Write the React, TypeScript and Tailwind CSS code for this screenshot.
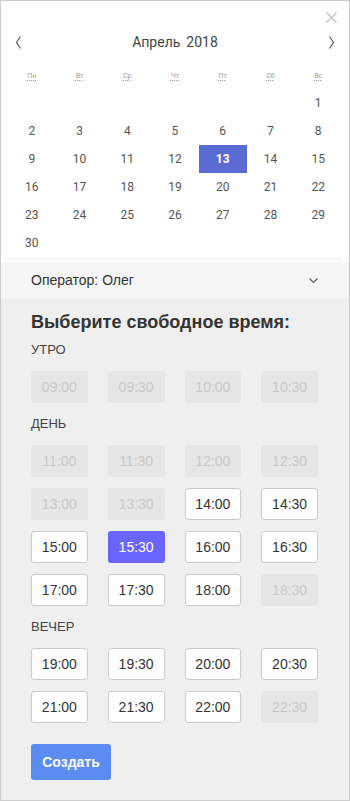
const weekdays = ['Пн', 'Вт', 'Ср', 'Чт', 'Пт', 'Сб', 'Вс'];

type Slot = { t: string; state: 'off' | 'free' | 'on' };

const groups: { title: string; slots: Slot[] }[] = [
  {
    title: 'Утро',
    slots: ['09:00', '09:30', '10:00', '10:30'].map((t) => ({ t, state: 'off' })),
  },
  {
    title: 'День',
    slots: [
      { t: '11:00', state: 'off' },
      { t: '11:30', state: 'off' },
      { t: '12:00', state: 'off' },
      { t: '12:30', state: 'off' },
      { t: '13:00', state: 'off' },
      { t: '13:30', state: 'off' },
      { t: '14:00', state: 'free' },
      { t: '14:30', state: 'free' },
      { t: '15:00', state: 'free' },
      { t: '15:30', state: 'on' },
      { t: '16:00', state: 'free' },
      { t: '16:30', state: 'free' },
      { t: '17:00', state: 'free' },
      { t: '17:30', state: 'free' },
      { t: '18:00', state: 'free' },
      { t: '18:30', state: 'off' },
    ],
  },
  {
    title: 'Вечер',
    slots: [
      { t: '19:00', state: 'free' },
      { t: '19:30', state: 'free' },
      { t: '20:00', state: 'free' },
      { t: '20:30', state: 'free' },
      { t: '21:00', state: 'free' },
      { t: '21:30', state: 'free' },
      { t: '22:00', state: 'free' },
      { t: '22:30', state: 'off' },
    ],
  },
];

function Calendar() {
  // April 2018 starts on a Sunday
  const cells: (number | null)[] = [null, null, null, null, null, null];
  for (let d = 1; d <= 30; d++) cells.push(d);

  return (
    <div className="relative bg-white px-[7px] pb-[3px] font-['Roboto',sans-serif]">
      <button className="absolute right-[12px] top-[11px] text-[#cfcfcf]">
        <svg width="11" height="11" viewBox="0 0 11 11" fill="none" stroke="currentColor" strokeWidth="1.6">
          <path d="M0.5 0.5L10.5 10.5M10.5 0.5L0.5 10.5" />
        </svg>
      </button>

      <div className="mt-[26px] flex h-[30px] items-center justify-between px-[7px] text-[#555]">
        <svg width="7" height="13" viewBox="0 0 7 13" fill="none" stroke="currentColor" strokeWidth="1.2">
          <path d="M5.5 0.5Q3 4 1.5 6.5Q3 9 5.5 12.5" />
        </svg>
        <div className="flex gap-[6px] text-[14px] text-[#444]">
          <span>Апрель</span>
          <span>2018</span>
        </div>
        <svg width="7" height="13" viewBox="0 0 7 13" fill="none" stroke="currentColor" strokeWidth="1.2">
          <path d="M1.5 0.5Q4 4 5.5 6.5Q4 9 1.5 12.5" />
        </svg>
      </div>

      <div className="mt-[7px] grid h-[25px] grid-cols-7 items-center">
        {weekdays.map((w) => (
          <abbr
            key={w}
            className="text-center text-[7px] text-[#9a9a9a] underline decoration-dotted underline-offset-2"
          >
            {w}
          </abbr>
        ))}
      </div>

      <div className="grid grid-cols-7 border-b border-[#eeeeee] pb-[1px]">
        {cells.map((d, i) => (
          <div
            key={i}
            className={
              d === 13
                ? 'flex h-[28px] items-center justify-center bg-[#5a6bd3] text-[12px] font-bold text-white'
                : 'flex h-[28px] items-center justify-center text-[12px] text-[#555]'
            }
          >
            {d ?? ''}
          </div>
        ))}
      </div>
    </div>
  );
}

function SlotButton({ slot }: { slot: Slot }) {
  if (slot.state === 'off')
    return (
      <div className="flex h-[32px] items-center justify-center rounded-[3px] bg-[#e6e6e6] text-[14px] text-[#c9c9c9]">
        {slot.t}
      </div>
    );
  if (slot.state === 'on')
    return (
      <button className="flex h-[32px] items-center justify-center rounded-[3px] bg-[#6a65ff] text-[14px] text-white">
        {slot.t}
      </button>
    );
  return (
    <button className="flex h-[32px] items-center justify-center rounded-[3px] border border-[#cccccc] bg-white text-[14px] text-[#333]">
      {slot.t}
    </button>
  );
}

export default function App() {
  return (
    <div className="flex h-[801px] w-[350px] flex-col overflow-hidden border border-[#cccccc] bg-[#efefef] font-['Liberation_Sans',Arial,sans-serif]">
      <Calendar />

      <div className="flex h-[36px] items-center justify-between bg-[#f5f5f5] pl-[30px] pr-[31px] text-[14px] text-[#333]">
        <span>Оператор: Олег</span>
        <svg width="9" height="5" viewBox="0 0 9 5" fill="none" stroke="#555" strokeWidth="1.1">
          <path d="M0.5 0.5L4.5 4.5L8.5 0.5" />
        </svg>
      </div>

      <div className="px-[30px]">
        <h2 className="mt-[13px] text-[18px] font-bold leading-[22px] text-[#333]">
          Выберите свободное время:
        </h2>
        {groups.map((g, gi) => (
          <div key={g.title} className={gi === 0 ? 'mt-[9px]' : 'mt-[13px]'}>
            <div className="text-[13px] uppercase leading-[16px] text-[#444]">{g.title}</div>
            <div className="mt-[13px] grid grid-cols-4 gap-x-[20px] gap-y-[11px] pr-[1px]">
              {g.slots.map((s) => (
                <SlotButton key={s.t} slot={s} />
              ))}
            </div>
          </div>
        ))}
        <button className="mt-[21px] h-[36px] w-[80px] rounded-[3px] bg-[#5a8cf1] text-[14px] font-bold text-white">
          Создать
        </button>
      </div>
    </div>
  );
}
